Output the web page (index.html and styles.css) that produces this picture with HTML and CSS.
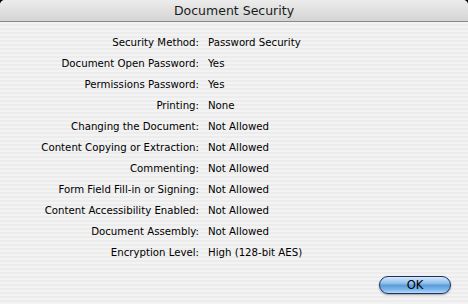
FILE: index.html
```html
<!DOCTYPE html>
<html lang="en">
<head>
    <meta charset="UTF-8">
    <title>Document Security</title>
    <link rel="stylesheet" href="styles.css">
</head>
<body>
    <div class="window">
        <div class="titlebar">Document Security</div>
        <div class="content">
            <div class="rows">
                <div class="label">Security Method:</div><div class="value">Password Security</div>
                <div class="label">Document Open Password:</div><div class="value">Yes</div>
                <div class="label">Permissions Password:</div><div class="value">Yes</div>
                <div class="label">Printing:</div><div class="value">None</div>
                <div class="label">Changing the Document:</div><div class="value">Not Allowed</div>
                <div class="label">Content Copying or Extraction:</div><div class="value">Not Allowed</div>
                <div class="label">Commenting:</div><div class="value">Not Allowed</div>
                <div class="label">Form Field Fill-in or Signing:</div><div class="value">Not Allowed</div>
                <div class="label">Content Accessibility Enabled:</div><div class="value">Not Allowed</div>
                <div class="label">Document Assembly:</div><div class="value">Not Allowed</div>
                <div class="label">Encryption Level:</div><div class="value">High (128-bit AES)</div>
            </div>
            <div class="buttons">
                <button class="okbtn">OK</button>
            </div>
        </div>
    </div>
</body>
</html>
```

FILE: styles.css
```css
html, body {
    margin: 0;
    padding: 0;
    background: #000;
}
body {
    width: 468px;
    height: 304px;
    overflow: hidden;
    font-family: "DejaVu Sans", sans-serif;
    color: #000;
}
.window {
    width: 468px;
    height: 304px;
    border-radius: 5px 5px 0 0;
    overflow: hidden;
    background: repeating-linear-gradient(to bottom, #ececec 0, #ececec 2px, #f3f3f3 2px, #f3f3f3 4px);
    display: flex;
    flex-direction: column;
}
.titlebar {
    height: 21px;
    line-height: 22px;
    text-align: center;
    font-size: 12.5px;
    color: #1a1a1a;
    background: linear-gradient(to bottom, #ececec, #d4d4d4);
    border-bottom: 1px solid #8a8a8a;
}
.content {
    flex: 1;
    display: flex;
    flex-direction: column;
}
.rows {
    display: grid;
    grid-template-columns: 199px 1fr;
    grid-auto-rows: 21px;
    margin-top: 10px;
    font-size: 10.2px;
    line-height: 21px;
}
.label {
    text-align: right;
}
.value {
    padding-left: 9px;
}
.buttons {
    display: flex;
    justify-content: flex-end;
    padding: 13px 17px 0 0;
}
.okbtn {
    width: 72px;
    height: 18px;
    padding: 0;
    border: 1px solid #1d2f66;
    border-radius: 9px;
    font-family: "DejaVu Sans", sans-serif;
    font-size: 11.5px;
    color: #000;
    background: linear-gradient(to bottom, #d4e8fa 0%, #8fbfea 40%, #5b9bd8 52%, #7db8ec 80%, #b8def9 100%);
    box-shadow: 0 1px 2px rgba(0, 0, 0, 0.35);
}
```
